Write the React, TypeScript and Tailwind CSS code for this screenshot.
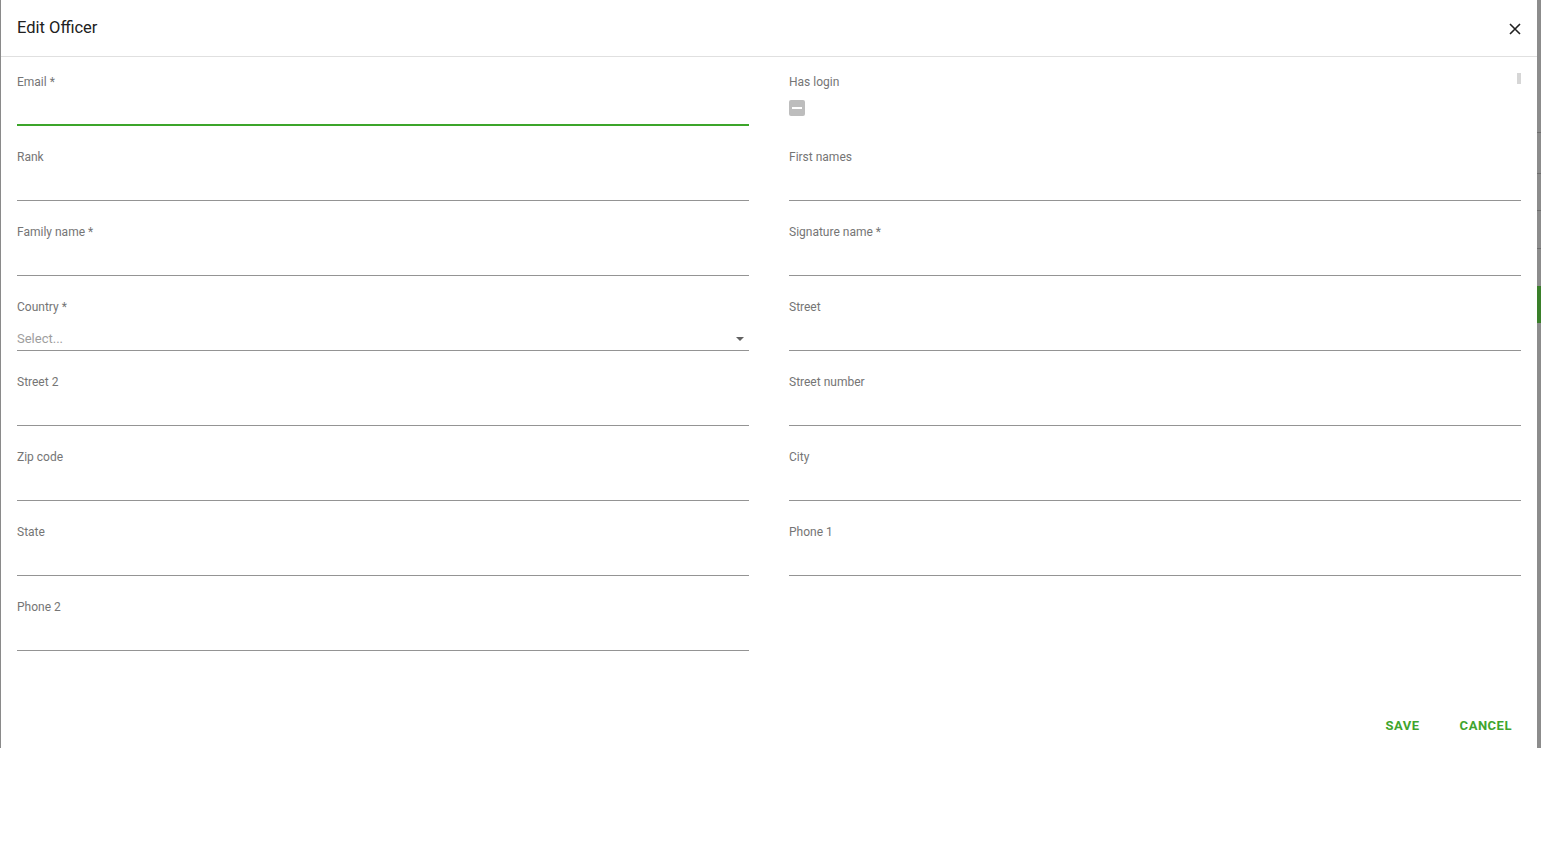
import React from 'react';

const rows: [string, string | null][] = [
  ['Email *', 'Has login'],
  ['Rank', 'First names'],
  ['Family name *', 'Signature name *'],
  ['Country *', 'Street'],
  ['Street 2', 'Street number'],
  ['Zip code', 'City'],
  ['State', 'Phone 1'],
  ['Phone 2', null],
];

const Field = ({ label }: { label: string }) => {
  const focused = label === 'Email *';
  const select = label === 'Country *';
  const checkbox = label === 'Has login';
  return (
    <div className="h-[75px] flex flex-col">
      <div className="mt-[1px] text-[12px] leading-[14px] h-[14px] text-[#757575]">{label}</div>
      {checkbox ? (
        <div className="mt-[11px] w-[16px] h-[16px] rounded-[2px] bg-[#bdbdbd] flex items-center justify-center">
          <div className="w-[10px] h-[2px] bg-white" />
        </div>
      ) : (
        <div
          className={`h-[37px] flex items-end pb-[3px] ${
            focused ? 'border-b-2 border-[#3ca52a]' : 'border-b border-[#949494]'
          }`}
        >
          {select && (
            <div className="flex w-full items-center">
              <span className="flex-1 text-[13px] leading-[16px] text-[#9e9e9e]">Select...</span>
              <span className="mr-[5px] w-0 h-0 border-l-[4px] border-r-[4px] border-t-[4px] border-l-transparent border-r-transparent border-t-[#616161]" />
            </div>
          )}
        </div>
      )}
    </div>
  );
};

export default function App() {
  return (
    <div className="h-[854px] bg-white" style={{ fontFamily: 'Roboto, "Liberation Sans", sans-serif' }}>
      <div className="flex h-[748px]">
        <div className="flex-1 flex flex-col border-l border-[#8a8a8a] bg-white">
          <div className="h-[57px] shrink-0 flex items-center justify-between pl-[16px] pr-[16px] border-b border-[#e0e0e0]">
            <h2 className="text-[16.5px] text-[#212121] pt-[1px]">Edit Officer</h2>
            <svg width="12" height="12" viewBox="0 0 12 12" className="text-[#212121] mt-[2px]">
              <path d="M1 1 L11 11 M11 1 L1 11" stroke="currentColor" strokeWidth="1.6" />
            </svg>
          </div>
          <div className="relative flex-1 px-[16px] pt-[17px]">
            <div className="absolute top-[16px] right-[16px] w-[4px] h-[11px] bg-[#d6d6d6]" />
            <div className="grid grid-cols-2 gap-x-[40px]">
              {rows.map(([l, r]) => (
                <React.Fragment key={l}>
                  <Field label={l} />
                  {r ? <Field label={r} /> : <div />}
                </React.Fragment>
              ))}
            </div>
          </div>
          <div className="h-[46px] shrink-0 flex items-center justify-end pr-[17px] pt-[2px]">
            <button className="px-[8px] mr-[24px] text-[13px] font-bold tracking-[0.04em] text-[#3fa52e]">SAVE</button>
            <button className="px-[8px] text-[13px] font-bold tracking-[0.04em] text-[#3fa52e]">CANCEL</button>
          </div>
        </div>
        <div className="w-[4px] flex flex-col bg-[#8c8c8c]">
          <div className="h-[132px]" />
          <div className="h-[1px] bg-[#6e6e6e]" />
          <div className="h-[40px]" />
          <div className="h-[1px] bg-[#6e6e6e]" />
          <div className="h-[36px]" />
          <div className="h-[1px] bg-[#6e6e6e]" />
          <div className="h-[37px]" />
          <div className="h-[1px] bg-[#6e6e6e]" />
          <div className="h-[37px]" />
          <div className="h-[37px] bg-[#3a7f2a]" />
        </div>
      </div>
    </div>
  );
}
